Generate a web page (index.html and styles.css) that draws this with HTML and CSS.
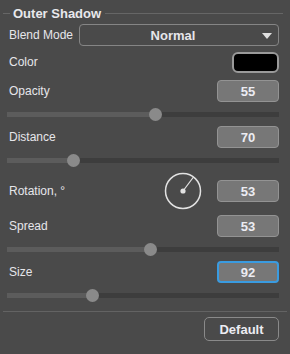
FILE: index.html
```html
<!DOCTYPE html>
<html lang="en">
<head>
    <meta charset="UTF-8">
    <title>Outer Shadow</title>
    <link rel="stylesheet" href="styles.css">
</head>
<body>
    <div class="panel">
        <div class="legend"><span>Outer Shadow</span></div>

        <div class="row blend-row">
            <span class="label">Blend Mode</span>
            <div class="select">
                <span>Normal</span>
                <span class="arrow"></span>
            </div>
        </div>

        <div class="row color-row">
            <span class="label">Color</span>
            <div class="swatch"></div>
        </div>

        <div class="row">
            <span class="label">Opacity</span>
            <div class="value">55</div>
        </div>
        <div class="slider">
            <div class="track"><div class="fill" style="width: 54.5%"></div><div class="thumb" style="left: 54.5%"></div></div>
        </div>

        <div class="row">
            <span class="label">Distance</span>
            <div class="value">70</div>
        </div>
        <div class="slider">
            <div class="track"><div class="fill" style="width: 24.3%"></div><div class="thumb" style="left: 24.3%"></div></div>
        </div>

        <div class="row rotation-row">
            <span class="label">Rotation, °</span>
            <svg class="dial" width="38" height="38" viewBox="0 0 38 38">
                <circle cx="19" cy="19" r="17.5" fill="none" stroke="#e2e2e2" stroke-width="1.5"/>
                <line x1="19" y1="19" x2="29.5" y2="5" stroke="#e2e2e2" stroke-width="1.2"/>
                <circle cx="19" cy="19" r="2.6" fill="#e2e2e2"/>
            </svg>
            <div class="value">53</div>
        </div>

        <div class="row">
            <span class="label">Spread</span>
            <div class="value">53</div>
        </div>
        <div class="slider">
            <div class="track"><div class="fill" style="width: 52.6%"></div><div class="thumb" style="left: 52.6%"></div></div>
        </div>

        <div class="row">
            <span class="label">Size</span>
            <div class="value active">92</div>
        </div>
        <div class="slider">
            <div class="track"><div class="fill" style="width: 31.3%"></div><div class="thumb" style="left: 31.3%"></div></div>
        </div>

        <div class="divider"></div>
        <div class="footer">
            <button class="default-btn">Default</button>
        </div>
    </div>
</body>
</html>
```

FILE: styles.css
```css
body {
    margin: 0;
    background-color: #4a4a4a;
    font-family: "Liberation Sans", Arial, sans-serif;
    font-size: 12px;
    color: #e6e6ea;
}
.panel {
    width: 290px;
    height: 354px;
    box-sizing: border-box;
    padding: 7px 11px 0 7px;
    background-color: #4a4a4a;
}
.legend {
    display: flex;
    align-items: center;
    margin-left: -4px;
    margin-right: -4px;
    height: 12px;
}
.legend::before,
.legend::after {
    content: "";
    height: 1px;
    background: #666;
}
.legend::before {
    width: 7px;
}
.legend::after {
    flex: 1;
}
.legend span {
    font-weight: bold;
    font-size: 13px;
    padding: 0 4px 0 3px;
    color: #e8e8ec;
}
.row {
    display: flex;
    align-items: center;
    justify-content: space-between;
    height: 22px;
    padding-left: 2px;
}
.blend-row {
    margin-top: 5px;
}
.color-row {
    margin-top: 6px;
    height: 20px;
    margin-bottom: 8px;
}
.select {
    width: 200px;
    height: 22px;
    box-sizing: border-box;
    border: 1px solid #858585;
    border-radius: 4px;
    display: flex;
    align-items: center;
    justify-content: center;
    position: relative;
    font-weight: bold;
    font-size: 13px;
    padding-right: 12px;
}
.arrow {
    position: absolute;
    right: 6px;
    top: 8px;
    width: 0;
    height: 0;
    border-left: 5px solid transparent;
    border-right: 5px solid transparent;
    border-top: 6px solid #e0e0e0;
}
.swatch {
    width: 47px;
    height: 21px;
    box-sizing: border-box;
    background: #000;
    border: 2px solid #9a9a9a;
    border-radius: 6px;
}
.value {
    width: 62px;
    height: 22px;
    box-sizing: border-box;
    background: #777;
    border: 1px solid #939393;
    border-radius: 4px;
    display: flex;
    align-items: center;
    justify-content: center;
    font-weight: bold;
    font-size: 13px;
    color: #ececf2;
}
.value.active {
    border: 2px solid #3a9be0;
}
.slider {
    height: 24px;
    display: flex;
    align-items: center;
}
.track {
    position: relative;
    width: 100%;
    height: 5px;
    background: #3d3d3d;
}
.fill {
    height: 100%;
    background: #5c5c5c;
}
.thumb {
    position: absolute;
    top: -4px;
    width: 13px;
    height: 13px;
    margin-left: -6px;
    border-radius: 50%;
    background: #8a8a8a;
}
.rotation-row {
    height: 38px;
    margin-bottom: 5px;
}
.dial {
    margin-left: auto;
    margin-right: 15px;
}
.divider {
    height: 1px;
    background: #636363;
    margin: 4px -8px 0 -4px;
}
.footer {
    display: flex;
    justify-content: flex-end;
    padding-top: 5px;
}
.default-btn {
    width: 75px;
    height: 24px;
    background: #4a4a4a;
    border: 1px solid #8a8a8a;
    border-radius: 5px;
    color: #ececf2;
    font-family: "Liberation Sans", Arial, sans-serif;
    font-weight: bold;
    font-size: 13px;
    padding: 0;
}
```
